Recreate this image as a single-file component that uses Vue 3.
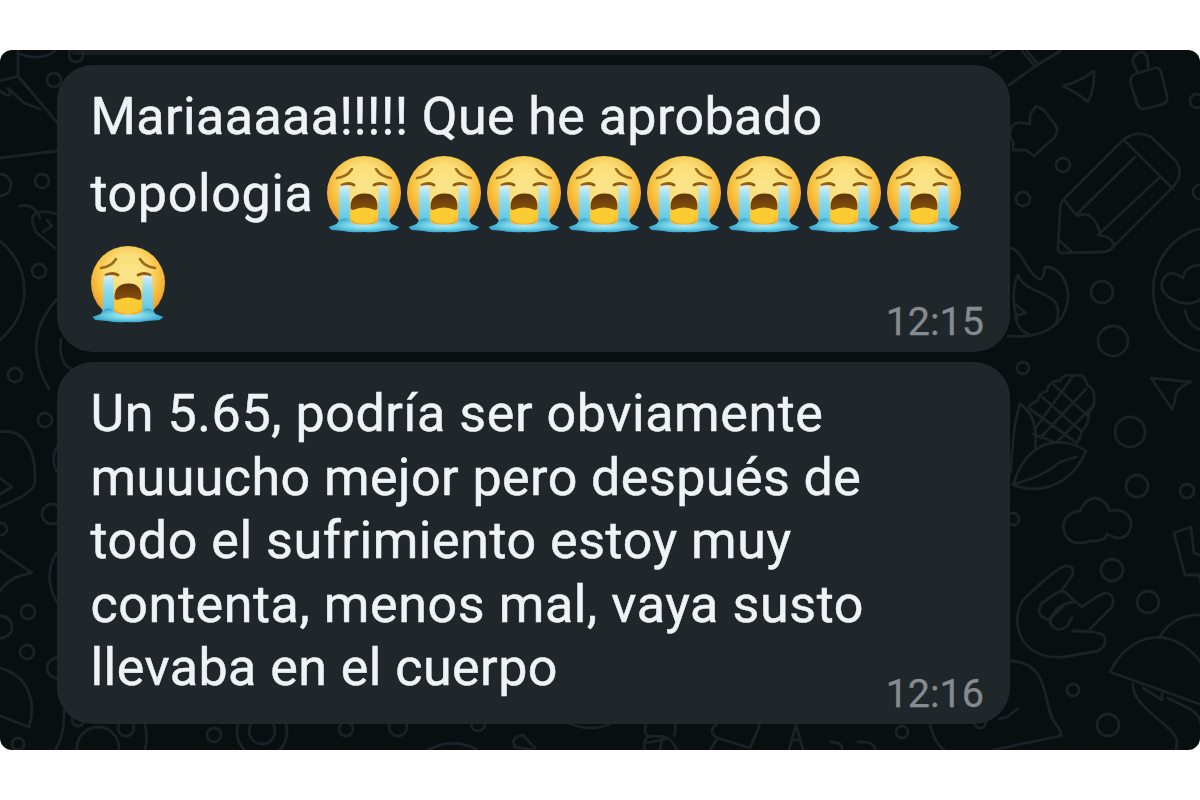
<script setup>
const messages = [
  {
    id: 'first',
    time: '12:15',
    lines: [
      { text: 'Mariaaaaa!!!!! Que he aprobado', cry: 0, spacing: 0.4 },
      { text: 'topologia', cry: 8, spacing: 0.6 },
      { text: '', cry: 1, spacing: 0 },
    ],
  },
  {
    id: 'second',
    time: '12:16',
    lines: [
      { text: 'Un 5.65, podría ser obviamente', cry: 0, spacing: 0.57 },
      { text: 'muuucho mejor pero después de', cry: 0, spacing: 0.44 },
      { text: 'todo el sufrimiento estoy muy', cry: 0, spacing: 0.55 },
      { text: 'contenta, menos mal, vaya susto', cry: 0, spacing: 0.6 },
      { text: 'llevaba en el cuerpo', cry: 0, spacing: 0.46 },
    ],
  },
]

const dots = [
  [1063, 165, 7], [1023, 199, 7], [1197, 101, 7], [1200, 192, 7],
  [1102, 292, 11], [1113, 341, 15], [1023, 368, 6], [1130, 432, 15], [1137, 486, 11],
  [1187, 491, 7], [1013, 519, 6], [1112, 570, 11], [1148, 602, 11], [1073, 690, 6],
  [1108, 725, 11], [54, 80, 7], [76, 55, 7], [42, 181, 7], [0, 185, 11], [39, 271, 7],
  [15, 375, 7], [45, 420, 7], [52, 514, 10], [1, 529, 6], [28, 612, 7], [1, 627, 11],
  [27, 652, 7], [57, 668, 10], [18, 744, 6], [98, 748, 21], [78, 720, 6],
  [126, 728, 8], [214, 735, 7], [262, 732, 25], [262, 731, 13], [346, 729, 7],
  [398, 727, 9], [478, 724, 7], [902, 732, 6], [980, 722, 6],
]
</script>

<template>
  <main class="page">
    <section class="chat">
      <svg class="wallpaper" viewBox="0 50 1200 700" aria-hidden="true">
        <rect class="previous" x="72" y="48" width="920" height="7" rx="3" />
        <g class="doodle">
          <circle v-for="(d, i) in dots" :key="i" :cx="d[0]" :cy="d[1]" :r="d[2]" />
          <!-- ruler, paper plane and bottle -->
          <path d="M990 58l18-10M1022 51l12 14M1009 85l25-18 25-15M1027 51l11 13 22-13" />
          <path d="M1063 86q16-4 31-15q1 17-6 31q-9-8-25-16z" />
          <path d="M1138 73l-5-10q-1-10 10-11q6 4 5 17M1135 74l20-6q4-1 6 4l6 24q1 6-4 8l-18 5q-6 1-8-6l-6-18q-2-8 4-11z" />
          <!-- maple leaf -->
          <path d="M1012 126q5-5 10-3l8 1v-9l6-9 8 4 12 16q3 5-1 11l-21 19-8-6-13 0v-8q-6-7-1-16z" />
          <!-- pencil -->
          <path d="M1063 200L1123 140Q1137 129 1151 137L1176 161Q1185 175 1172 188L1114 246Q1109 252 1102 252L1062 253Q1057 253 1058 247L1060 212Q1060 204 1063 200zM1125 141L1171 187M1135 157L1078 213M1160 177L1098 235M1065 201L1077 216Q1094 208 1101 236Q1109 235 1114 244M1059 240L1072 252" />
          <!-- flame -->
          <path d="M1010 248C1023 250 1028 276 1040 279C1047 277 1042 268 1046 267C1076 267 1085 343 1008 336M1017 318C1012 303 1013 285 1018 275C1026 298 1068 288 1056 323M1015 304l11 9-11 3Q1018 330 1028 334" />
          <!-- globe -->
          <path d="M1202 228C1137 244 1137 336 1202 352M1202 265Q1185 265 1183 278Q1168 267 1162 282C1159 298 1184 307 1195 302Q1200 301 1202 297M1185 310q3 16 16 20" />
          <!-- corn -->
          <path d="M1029 407q3-5 9-6 0-8 9-10 2-11 13-10 4-8 13-5 12-4 14 9 9 4 7 18-1 5-5 9 0 13-7 19-2 8-6 12M1030 409l44 32M1042 397l39 34M1054 385l34 31M1033 434l21 8M1073 376l-38 53M1086 389l-46 49M1094 405l-37 37" />
          <path d="M1011 472q2-48 9-68 19 12 15 46M1013 485c15-48 50-49 73-34-13 31-42 45-73 34zM1014 484q29-7 46-22M1076 457l-16 5" />
          <path d="M1151 378l40 4q-17 6-16 20l-3 7z" />
          <!-- cloud -->
          <path d="M1080 511Q1086 498 1095 498Q1107 500 1109 511Q1127 507 1131 522Q1131 539 1116 538L1107 534Q1105 542 1091 541Q1066 549 1063 526Q1065 513 1080 511z" />
          <!-- rock hand -->
          <path d="M1062 590L1072 576Q1076 566 1066 566Q1058 566 1023 600Q1011 621 1024 642Q1037 659 1063 657L1098 651Q1108 645 1104 636Q1100 631 1073 631M1090 629L1112 607Q1116 595 1106 593Q1101 593 1082 607L1070 597Q1064 588 1055 594L1042 603Q1034 614 1048 620L1063 607M1074 602Q1054 604 1050 623Q1057 634 1067 626L1072 618" />
          <!-- lightning -->
          <path d="M1202 556l-8-3-3-26-17 6 11 42h14l5 20" />
          <!-- umbrella and bell -->
          <path d="M1110 672C1130 630 1175 625 1202 664M1110 672L1202 705M1159 638q14-24 43-23M1133 684C1131 706 1172 724 1177 740L1176 750M1168 698l18 9q14 6 16 20M1143 688l19 12v-6" />
          <path d="M1010 661c43 1 32 49 46 63q7 10 4 12l-67 14M999 719l8-2 10-8" />
          <!-- left edge figures -->
          <path d="M0 81l18-5 42 50M18 76V50M20 54q22 8 36-4M0 91q15 10 8-3l16 15 16 6M0 158l57-7M20 206q14-3 20 12M57 214q-34-9-21 18l19 16M47 220l5 6-9 6" />
          <path d="M0 241c31 26 34 69 0 99M57 299q-37 41-8 90M61 339q-3 26 13 31M0 432c22-5 36 16 35 48q2 12-35 27M0 478l12 9-12 7" />
          <path d="M57 447q-7 11 0 25M0 551l32 22q-22 3-32 18M57 552q-15 25 0 50M0 668c24 6 38 28 29 59l-29-11M64 711q1 24-10 41M145 725q3 12 0 25" />
          <!-- figures below the messages -->
          <path d="M428 750q24-13 48-1M570 724q21 8 40 0M532 750l-17-3q-5-10 8-12l12 13M646 724q-3 8 2 12M675 724q1 8-1 12M645 750q-3-14 8-14l12 1q7 2 12 13M662 738l-2 12M646 743l20-4M717 724q-10 7 0 14l33 10 10-24M717 739l-7 11M789 750l7-25 7 25M793 740h8M831 742q12 0 11 8M858 742q17-1 17 8M930 724q4 19 15 27" />
        </g>
      </svg>

      <svg class="definitions" aria-hidden="true">
        <defs>
          <radialGradient id="cry-face" cx="50%" cy="38%" r="62%">
            <stop offset="0" stop-color="#fbe58c" />
            <stop offset=".45" stop-color="#fade76" />
            <stop offset=".72" stop-color="#f8bd3b" />
            <stop offset=".9" stop-color="#f2a42f" />
            <stop offset="1" stop-color="#d98727" />
          </radialGradient>
          <linearGradient id="cry-tear" x1="0" y1="0" x2="0" y2="1">
            <stop offset="0" stop-color="#d5effa" />
            <stop offset=".35" stop-color="#93dcec" />
            <stop offset="1" stop-color="#5cc5de" />
          </linearGradient>
          <linearGradient id="cry-mouth" x1="0" y1="0" x2="0" y2="1">
            <stop offset="0" stop-color="#5e3309" />
            <stop offset="1" stop-color="#86520c" />
          </linearGradient>
          <radialGradient id="cry-pool">
            <stop offset="0" stop-color="#b4ebf1" />
            <stop offset=".5" stop-color="#78d7e8" />
            <stop offset="1" stop-color="#3ba8cf" />
          </radialGradient>
          <symbol id="crying" viewBox="0 0 80 80">
            <circle cx="40" cy="40" r="37" fill="url(#cry-face)" />
            <ellipse cx="40" cy="62" rx="14" ry="9" fill="#fbcb34" />
            <path d="M26.500 54q0-13 13.500-13.500t13.500 13.500q0 4-4 2.500-9.500-4-19 0-4 1.500-4-2.500z" fill="url(#cry-mouth)" />
            <path d="M13 25q10-1 15-9M67 25q-10-1-15-9" fill="none" stroke="#9c6a1f" stroke-width="2.600" stroke-linecap="round" />
            <path d="M18 32q7-3 12 0M50 32q6-3 12 0" fill="none" stroke="#8f5a1a" stroke-width="2.800" stroke-linecap="round" />
            <path d="M15.500 36q0-4 5-3.500 5-1 5 4l.5 33H14.500zM54.500 37q0-5 5-4.500 5 0 5 3.500l1 34H54z" fill="url(#cry-tear)" />
            <path d="M4.500 74l8-3 3-4q4-3 8-1 3 4 8 5 8 1 17 0 5-1 8-5 4-2 8 1l3 4 8 3-4 3-13 1q-8 2-19 1-12 1-20-1l-12-1z" fill="url(#cry-pool)" />
          </symbol>
        </defs>
      </svg>

      <article v-for="m in messages" :key="m.id" class="bubble" :class="m.id">
        <div class="body">
          <p v-for="(line, i) in m.lines" :key="i" class="line" :class="{ tall: line.cry }">
            <span v-if="line.text" class="words" :style="{ letterSpacing: line.spacing + 'px' }">{{ line.text }}</span>
            <span v-if="line.cry" class="emojis">
              <svg v-for="n in line.cry" :key="n" class="emoji" role="img" aria-label="😭">
                <use href="#crying" />
              </svg>
            </span>
          </p>
        </div>
        <time class="time">{{ m.time }}</time>
      </article>
    </section>
  </main>
</template>

<style>
body {
  background: #fff;
}
</style>

<style scoped>
.page {
  height: 800px;
  padding: 50px 0;
  box-sizing: border-box;
}
.chat {
  position: relative;
  height: 700px;
  box-sizing: border-box;
  padding: 15px 190px 0 57px;
  display: flex;
  flex-direction: column;
  gap: 10px;
  overflow: hidden;
  border-radius: 12px;
  background: #070f11;
  font-family: Roboto, sans-serif;
}
.wallpaper {
  position: absolute;
  inset: 0;
  width: 1200px;
  height: 700px;
}
.previous {
  fill: #151d20;
}
.doodle {
  fill: none;
  stroke: #1a2226;
  stroke-width: 2.8;
  stroke-linecap: round;
  stroke-linejoin: round;
}
.definitions {
  position: absolute;
  width: 0;
  height: 0;
}
.bubble {
  position: relative;
  display: grid;
  box-sizing: border-box;
  padding: 20px 26px 0 33.5px;
  border-radius: 36px;
  background: #20272b;
}
.first {
  height: 287px;
}
.second {
  height: 362px;
}
.body,
.time {
  grid-area: 1 / 1;
}
.line {
  display: flex;
  align-items: center;
  height: 63.5px;
  margin: 0;
  color: #f0f3f6;
  font-size: 52px;
  line-height: 63.5px;
  white-space: nowrap;
  -webkit-text-stroke: 0.5px currentColor;
}
.line.tall {
  height: 90.5px;
}
.words + .emojis {
  margin-left: 11px;
}
.emojis {
  display: flex;
  margin-top: -2px;
}
.line.tall:last-child .emojis {
  margin-left: -2.5px;
}
.emoji {
  width: 80px;
  height: 80px;
}
.time {
  align-self: end;
  justify-self: end;
  padding-bottom: 6px;
  color: #858b8f;
  font-size: 39.5px;
  line-height: 48px;
  -webkit-text-stroke: 0.3px currentColor;
}
</style>
